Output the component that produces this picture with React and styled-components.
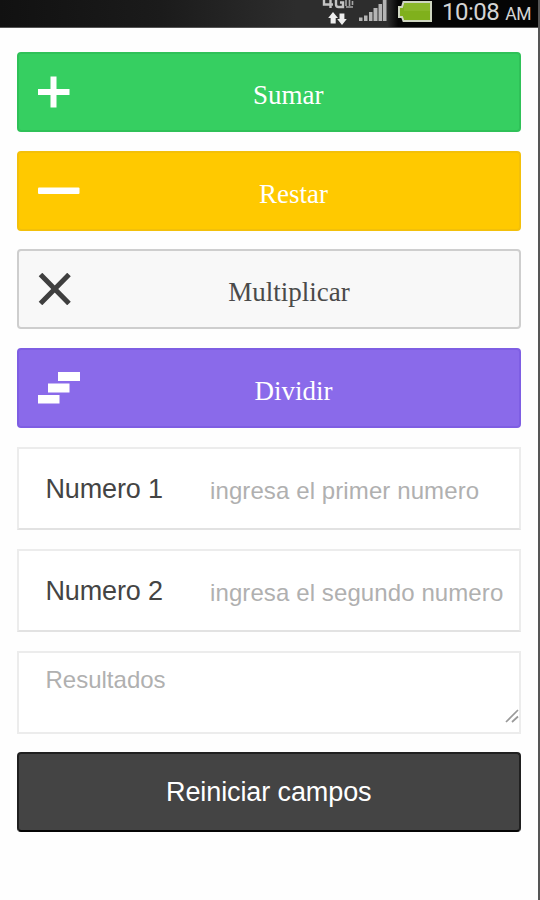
import React from 'react';
import styled, { createGlobalStyle } from 'styled-components';

const GlobalStyle = createGlobalStyle`
  * {
    box-sizing: border-box;
  }
  body {
    margin: 0;
    background: #fff;
  }
`;

const Screen = styled.div`
  width: 540px;
  height: 900px;
  overflow: hidden;
  background: #fefefe;
  border-right: 2px solid #555;
  font-family: "Liberation Sans", Arial, sans-serif;
`;

const StatusBar = styled.div`
  display: flex;
  align-items: flex-start;
  justify-content: flex-end;
  height: 28px;
  padding-right: 3px;
  background: linear-gradient(90deg, #111 0%, #1b1b1b 30%, #2d2d2d 55%, #2d2d2d 72%, #050505 74%, #050505 100%);
  border-bottom: 1px solid #555;
`;

const Clock = styled.div`
  display: flex;
  align-items: baseline;
  width: 93px;
  margin-left: 9px;
  color: #d4d4d4;
  font-family: Roboto, sans-serif;
  font-size: 24px;
  letter-spacing: -0.5px;
  line-height: 24px;
  white-space: nowrap;
`;

const Meridiem = styled.span`
  margin-left: 6px;
  font-size: 17.5px;
`;

const Form = styled.div`
  display: flex;
  flex-direction: column;
  padding: 24px 17px 0 16.5px;
`;

const Button = styled.button`
  display: flex;
  align-items: center;
  height: 80px;
  margin: 0 0 18.6px;
  padding: 0 12px 0 19.5px;
  border: 2px solid ${({ border }) => border};
  border-radius: 4px;
  background: ${({ bg }) => bg};
  color: ${({ color }) => color || '#fff'};
  font-family: "Liberation Serif", "Times New Roman", serif;
  font-size: 27px;
  text-align: center;
`;

const Label = styled.span`
  flex: 1;
  padding-top: 6px;
  line-height: 30px;
`;

const ResetButton = styled(Button)`
  margin: 0;
  padding: 0;
  border-bottom-color: #050505;
  font-family: "Liberation Sans", Arial, sans-serif;
`;

const ResetLabel = styled(Label)`
  padding-top: 1px;
  letter-spacing: -0.1px;
`;

const Fields = styled.div`
  padding-top: 0.6px;
`;

const Field = styled.label`
  display: flex;
  align-items: center;
  height: 83px;
  margin-bottom: 19px;
  padding-left: 27px;
  border: 2px solid #ececec;
  border-bottom-color: #e2e2e2;
  background: #fff;
`;

const FieldName = styled.span`
  width: 164.5px;
  padding-top: 2px;
  color: #444;
  font-size: 27px;
  letter-spacing: -0.15px;
`;

const Input = styled.input`
  flex: 1;
  min-width: 0;
  padding: 6px 0 0;
  border: 0;
  outline: 0;
  background: transparent;
  font-family: inherit;
  font-size: 24px;
  letter-spacing: 0.1px;
  &::placeholder {
    color: #b0b0b0;
    opacity: 1;
  }
`;

const Result = styled.div`
  display: flex;
  justify-content: space-between;
  height: 83px;
  margin-bottom: 18px;
  padding-left: 27px;
  border: 2px solid #ececec;
  background: #fff;
  color: #b0b0b0;
  font-size: 24px;
  line-height: 28px;
`;

const ResultText = styled.span`
  padding-top: 13px;
`;

const GripIcon = styled.svg`
  align-self: flex-end;
  margin: 0 0 9px;
`;

const Network = () => (
    <svg width="36" height="27" viewBox="0 0 36 27">
        <g fill="none" stroke="#c4c4c4" strokeWidth="2.4">
            <path d="M2 0 V4.5 H11 M8.5 0 V8"/>
            <path d="M14 0 V4.5 Q14 7 16.5 7 H21 V2.5 H18"/>
            <path d="M24 0 V6 M27.5 0 V6 M30.5 1 V5 M24 7 H31" strokeWidth="1.6" opacity="0.8"/>
        </g>
        <path d="M11 12 L16 18 H13.7 V23.5 H8.6 V18 H6.2 Z M20 25 L15.2 19 H17.5 V13.5 H22.4 V19 H24.8 Z" fill="#eee"/>
    </svg>
);

const Signal = () => (
    <svg width="29" height="27" viewBox="0 0 29 27">
        <path d="M1 17.5h3.5v3.5h-3.5z M6 15.5h3.5v5.5h-3.5z M11 12h3.5v9h-3.5z M15.5 8h4v13h-4z M20.5 4h3.5v17h-3.5z M24.8 0h3.7v21h-3.7z" fill="#b5b5b5"/>
    </svg>
);

const Battery = () => (
    <svg width="46" height="27" viewBox="0 0 46 27">
        <path d="M16.5 2 H44 V21 H16.5 L15 17 H12 V7 H15 Z" fill="#80b01c" stroke="#cfd6c0" strokeWidth="2"/>
        <path d="M17 3 H43 V11 H17 Z" fill="#93bd38" opacity="0.5"/>
    </svg>
);

const PlusIcon = () => (
    <svg width="31.5" height="32" viewBox="0 0 31.5 32">
        <path d="M12.5 .5h6v12.5h13v6h-13v12.5h-6v-12.5h-12.5v-6h12.5z" fill="#fff"/>
    </svg>
);

const MinusIcon = () => (
    <svg width="42" height="32" viewBox="0 0 42 32">
        <rect y="12.5" width="41.5" height="6.5" rx="1" fill="#fff"/>
    </svg>
);

const TimesIcon = () => (
    <svg width="33" height="32" viewBox="0 0 33 32">
        <path d="M2.5 1.5 L31 30.5 M31 1.5 L2.5 30.5" stroke="#3f3f3f" strokeWidth="5"/>
    </svg>
);

const StepsIcon = () => (
    <svg width="42" height="32" viewBox="0 0 42 32">
        <path d="M20 0h22v9h-22z M10 11.5h21.5v9h-21.5z M0 23h21.5v8.5h-21.5z" fill="#fff"/>
    </svg>
);

const operations = [
    { name: 'Sumar', icon: <PlusIcon/>, bg: '#36cf61', border: '#2fc158' },
    { name: 'Restar', icon: <MinusIcon/>, bg: '#ffc900', border: '#f3c00a' },
    { name: 'Multiplicar', icon: <TimesIcon/>, bg: '#f8f8f8', border: '#cecece', color: '#4a4a4a' },
    { name: 'Dividir', icon: <StepsIcon/>, bg: '#8a6aea', border: '#7e5ee3' },
];

const App = () => (
    <>
        <GlobalStyle/>
        <Screen>
            <StatusBar>
                <Network/>
                <Signal/>
                <Battery/>
                <Clock>10:08<Meridiem>AM</Meridiem></Clock>
            </StatusBar>
            <Form>
                {operations.map(({ name, icon, bg, border, color }) => (
                    <Button key={name} bg={bg} border={border} color={color}>
                        {icon}
                        <Label>{name}</Label>
                    </Button>
                ))}
                <Fields>
                    <Field>
                        <FieldName>Numero 1</FieldName>
                        <Input placeholder="ingresa el primer numero"/>
                    </Field>
                    <Field>
                        <FieldName>Numero 2</FieldName>
                        <Input placeholder="ingresa el segundo numero"/>
                    </Field>
                    <Result>
                        <ResultText>Resultados</ResultText>
                        <GripIcon width="14" height="14" viewBox="0 0 14 14">
                            <path d="M1 13 L13 1 M7 13 L13 7.5" stroke="#999" strokeWidth="1.7"/>
                        </GripIcon>
                    </Result>
                </Fields>
                <ResetButton bg="#444" border="#202020">
                    <ResetLabel>Reiniciar campos</ResetLabel>
                </ResetButton>
            </Form>
        </Screen>
    </>
);

export default App;
